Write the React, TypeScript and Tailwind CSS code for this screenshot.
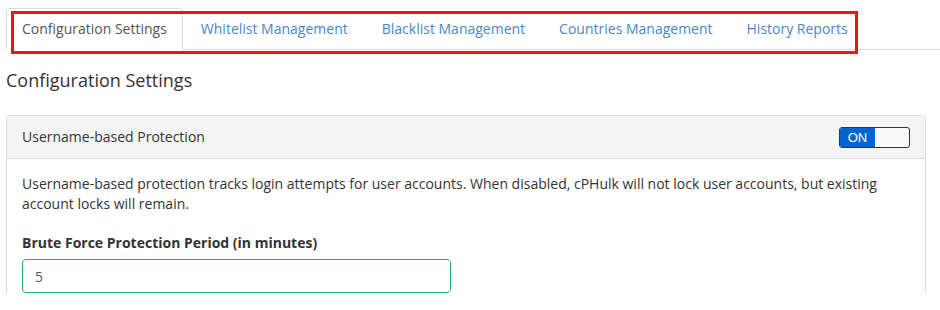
import { useState } from "react";

const tabs = [
  "Configuration Settings",
  "Whitelist Management",
  "Blacklist Management",
  "Countries Management",
  "History Reports",
];

export default function App() {
  const [active, setActive] = useState(0);
  const [enabled, setEnabled] = useState(true);
  const [period, setPeriod] = useState("5");

  return (
    <div
      className="relative h-[310px] w-[940px] overflow-hidden bg-white pl-[6px] pt-[8px] text-[14px] leading-[20px] text-[#333]"
      style={{ fontFamily: '"Open Sans", "Noto Sans", sans-serif' }}
    >
      <ul className="flex border-b border-[#ddd]">
        {tabs.map((tab, index) => (
          <li key={tab} className="-mb-px mr-[2px]">
            <button
              onClick={() => setActive(index)}
              className={
                index === active
                  ? "rounded-t-[4px] border border-[#ddd] border-b-white bg-white px-[15px] py-[10px] text-[#555]"
                  : "rounded-t-[4px] border border-transparent px-[15px] py-[10px] text-[#4a86c8]"
              }
            >
              {tab}
            </button>
          </li>
        ))}
      </ul>

      {/* annotation box over the tab row */}
      <div className="pointer-events-none absolute left-[11px] top-[11px] h-[43px] w-[847px] border-[3px] border-[#e8151f]" />

      <h2 className="mb-[22px] mt-[17px] text-[18px] leading-[26px] text-[#333]">Configuration Settings</h2>

      <section className="mr-[14px] rounded-t-[4px] border border-b-0 border-[#ddd]">
        <header className="flex h-[43px] items-center justify-between border-b border-[#ddd] bg-[#f4f4f4] px-[15px]">
          <span>Username-based Protection</span>
          <button
            onClick={() => setEnabled(!enabled)}
            className="flex h-[21px] w-[71px] overflow-hidden rounded-[3px] border border-[#333] bg-[#f9f9f9] text-[13px] leading-[19px]"
          >
            {enabled ? (
              <span className="w-[35px] bg-[#0064d2] text-center text-white" style={{ fontFamily: '"Liberation Sans", Arial, sans-serif' }}>
                ON
              </span>
            ) : (
              <span className="ml-auto w-[35px] bg-[#ddd] text-center text-[#333]">OFF</span>
            )}
          </button>
        </header>
        <div className="px-[15px] pt-[15px]">
          <p className="mb-[19px]">
            Username-based protection tracks login attempts for user accounts. When disabled, cPHulk will not lock user
            accounts, but existing account locks will remain.
          </p>
          <label className="mb-[6px] block font-bold">Brute Force Protection Period (in minutes)</label>
          <input
            value={period}
            onChange={(event) => setPeriod(event.target.value)}
            className="h-[34px] w-[429px] rounded-[4px] border border-[#2eaf5a] px-[12px] text-[14px] text-[#555] outline-none"
          />
        </div>
      </section>
    </div>
  );
}
